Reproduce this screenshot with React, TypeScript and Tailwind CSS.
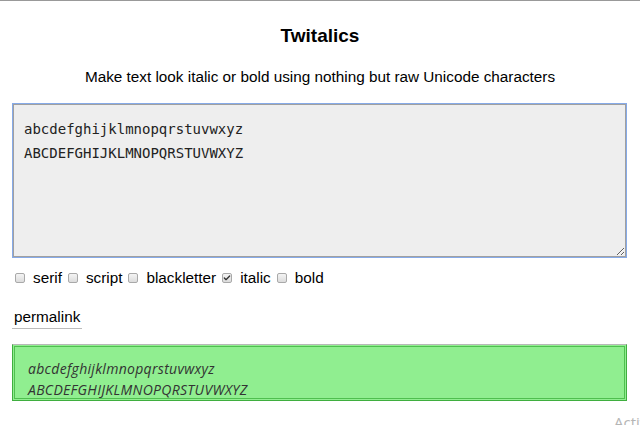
import { Check } from 'lucide-react';

const options = [
  { label: 'serif', checked: false },
  { label: 'script', checked: false },
  { label: 'blackletter', checked: false },
  { label: 'italic', checked: true },
  { label: 'bold', checked: false },
];

function Box({ checked }: { checked: boolean }) {
  return (
    <span className="ml-[3px] mr-[8px] flex h-[10px] w-[10px] items-center justify-center rounded-[2px] border border-[#a9a9a9] bg-gradient-to-b from-[#f4f4f4] to-[#dcdcdc]">
      {checked && <Check className="h-[8px] w-[8px] text-[#333]" strokeWidth={4} />}
    </span>
  );
}

export default function App() {
  return (
    <div className="relative h-[425px] w-[640px] overflow-hidden border-t border-[#999] bg-white px-3 font-['Liberation_Sans',Arial,sans-serif] text-black">
      <h1 className="pt-[24px] text-center text-[19px] font-bold leading-[22px]">Twitalics</h1>
      <p className="mt-[21px] text-center text-[15.3px] leading-[18px]">
        Make text look italic or bold using nothing but raw Unicode characters
      </p>

      <div className="mt-[17px] w-[615px] border border-[#86aae8]">
        <textarea
          readOnly
          defaultValue={'abcdefghijklmnopqrstuvwxyz\nABCDEFGHIJKLMNOPQRSTUVWXYZ'}
          className="block h-[153px] w-full resize border border-[#a0a0a0] bg-[#eeeeee] px-[10px] pt-[12px] font-['DejaVu_Sans_Mono',monospace] text-[14px] leading-[24px] text-[#222] outline-none"
        />
      </div>

      <div className="mt-[10px] flex items-center text-[15.3px] leading-[20px]">
        {options.map((o) => (
          <label key={o.label} className="mr-[3px] flex items-center">
            <Box checked={o.checked} />
            {o.label}
          </label>
        ))}
      </div>

      <div className="mt-[17px]">
        <a className="inline-block border-b border-[#bbb] px-[2px] pb-[1px] text-[15.3px] leading-[20px] text-black">
          permalink
        </a>
      </div>

      <div className="mt-[15px] w-[615px] border border-[#3fae3f] border-t-[#b8b8b8] bg-[#90ee90] p-px">
        <div className="h-[53px] border border-[#4fbf4f] px-[13px] pt-[11px] font-['Open_Sans',sans-serif] text-[14px] italic leading-[21px] tracking-[0.3px] text-[#333]">
          <div>abcdefghijklmnopqrstuvwxyz</div>
          <div>ABCDEFGHIJKLMNOPQRSTUVWXYZ</div>
        </div>
      </div>

      <span className="absolute left-[614px] top-[410px] font-['Open_Sans',sans-serif] text-[15px] text-[#b5b5b5]">
        Activate Windows
      </span>
    </div>
  );
}
